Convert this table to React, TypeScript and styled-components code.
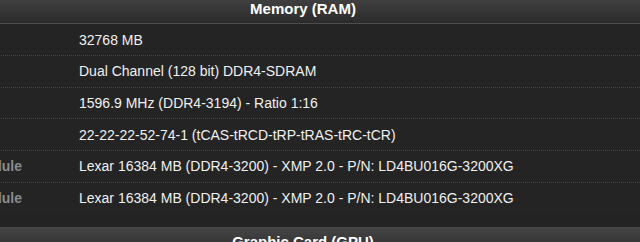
import styled, { createGlobalStyle } from "styled-components"

const Global = createGlobalStyle`
body {
  margin: 0;
  background-color: #232323;
  font-family: "Liberation Sans", Arial, sans-serif;
  overflow: hidden;
}
`

const memory = [
  { label: "", value: "32768 MB" },
  { label: "", value: "Dual Channel (128 bit) DDR4-SDRAM" },
  { label: "", value: "1596.9 MHz (DDR4-3194) - Ratio 1:16" },
  { label: "", value: "22-22-22-52-74-1 (tCAS-tRCD-tRP-tRAS-tRC-tCR)" },
  { label: "Module", value: "Lexar 16384 MB (DDR4-3200) - XMP 2.0 - P/N: LD4BU016G-3200XG" },
  { label: "Module", value: "Lexar 16384 MB (DDR4-3200) - XMP 2.0 - P/N: LD4BU016G-3200XG" },
]

const App = () => {
  return (
    <Page>
      <Global />
      <Section>
        <Header>Memory (RAM)</Header>
        {memory.map((m, i) => (
          <Row key={i}>
            <Label>{m.label}</Label>
            <Value>{m.value}</Value>
          </Row>
        ))}
      </Section>
      <Section>
        <Header>Graphic Card (GPU)</Header>
        <Row>
          <Label>GPU</Label>
          <Value>-</Value>
        </Row>
      </Section>
    </Page>
  )
}

export default App

const Page = styled.div`
margin: -5.7px 0 0 -27px;
width: 667px;
`

const Section = styled.div`
margin-bottom: 13.7px;
`

const Header = styled.div`
height: 29px;
line-height: 30px;
padding-right: 7px;
text-align: center;
font-size: 15px;
font-weight: bold;
color: #ffffff;
background: linear-gradient(to bottom, #454545, #2b2b2b);
border-bottom: 1px dotted #555555;
`

const Row = styled.div`
display: grid;
grid-template-columns: 106px 1fr;
align-items: center;
height: 30.7px;
border-bottom: 1px dotted #474747;
background-color: #242424;
&:last-child {
  border-bottom: none;
}
`

const Label = styled.div`
font-size: 14px;
font-weight: bold;
color: #8a8a8a;
`

const Value = styled.div`
font-size: 14px;
color: #f0f0f0;
white-space: nowrap;
`
